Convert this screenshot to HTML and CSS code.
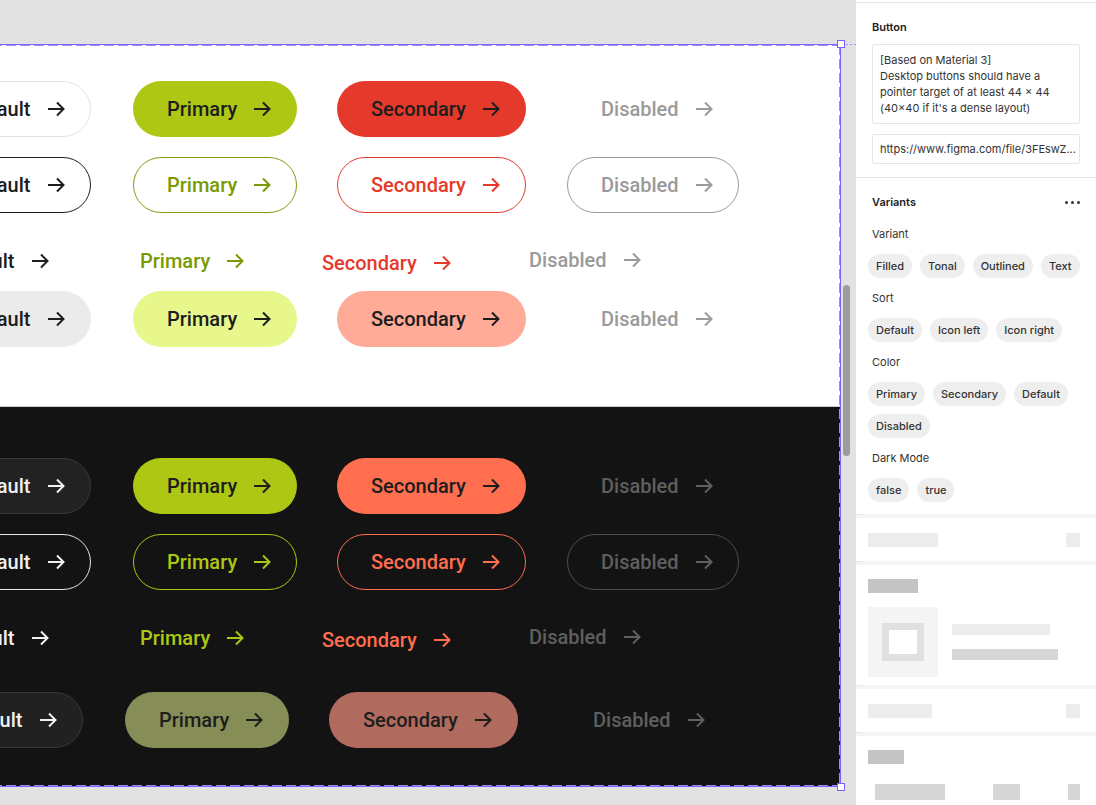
FILE: index.html
```html
<!DOCTYPE html>
<html lang="en">
<head>
<meta charset="utf-8">
<title>Button variants</title>
<link rel="stylesheet" href="styles.css">
</head>
<body>
<div class="app">
  <main class="canvas">
    <div class="frame">
      <section class="mode light">
        <div class="row">
          <span class="btn l-def-filled">Default<svg class="arr" viewBox="0 0 18 16"><path d="M1 8H16.5M10 1.5L16.5 8L10 14.5"/></svg></span>
          <span class="btn pri-filled">Primary<svg class="arr" viewBox="0 0 18 16"><path d="M1 8H16.5M10 1.5L16.5 8L10 14.5"/></svg></span>
          <span class="btn l-sec-filled">Secondary<svg class="arr" viewBox="0 0 18 16"><path d="M1 8H16.5M10 1.5L16.5 8L10 14.5"/></svg></span>
          <span class="btn l-dis">Disabled<svg class="arr" viewBox="0 0 18 16"><path d="M1 8H16.5M10 1.5L16.5 8L10 14.5"/></svg></span>
        </div>
        <div class="row gap">
          <span class="btn l-def-out">Default<svg class="arr" viewBox="0 0 18 16"><path d="M1 8H16.5M10 1.5L16.5 8L10 14.5"/></svg></span>
          <span class="btn l-pri-out">Primary<svg class="arr" viewBox="0 0 18 16"><path d="M1 8H16.5M10 1.5L16.5 8L10 14.5"/></svg></span>
          <span class="btn l-sec-out">Secondary<svg class="arr" viewBox="0 0 18 16"><path d="M1 8H16.5M10 1.5L16.5 8L10 14.5"/></svg></span>
          <span class="btn l-dis l-dis-out">Disabled<svg class="arr" viewBox="0 0 18 16"><path d="M1 8H16.5M10 1.5L16.5 8L10 14.5"/></svg></span>
        </div>
        <div class="row text-row gap">
          <span class="btn txt l-def-txt">Default<svg class="arr" viewBox="0 0 18 16"><path d="M1 8H16.5M10 1.5L16.5 8L10 14.5"/></svg></span>
          <span class="btn txt l-pri-txt">Primary<svg class="arr" viewBox="0 0 18 16"><path d="M1 8H16.5M10 1.5L16.5 8L10 14.5"/></svg></span>
          <span class="btn txt l-sec-txt down">Secondary<svg class="arr" viewBox="0 0 18 16"><path d="M1 8H16.5M10 1.5L16.5 8L10 14.5"/></svg></span>
          <span class="btn txt l-dis up">Disabled<svg class="arr" viewBox="0 0 18 16"><path d="M1 8H16.5M10 1.5L16.5 8L10 14.5"/></svg></span>
        </div>
        <div class="row gap-sm">
          <span class="btn l-def-tonal">Default<svg class="arr" viewBox="0 0 18 16"><path d="M1 8H16.5M10 1.5L16.5 8L10 14.5"/></svg></span>
          <span class="btn l-pri-tonal">Primary<svg class="arr" viewBox="0 0 18 16"><path d="M1 8H16.5M10 1.5L16.5 8L10 14.5"/></svg></span>
          <span class="btn l-sec-tonal">Secondary<svg class="arr" viewBox="0 0 18 16"><path d="M1 8H16.5M10 1.5L16.5 8L10 14.5"/></svg></span>
          <span class="btn l-dis">Disabled<svg class="arr" viewBox="0 0 18 16"><path d="M1 8H16.5M10 1.5L16.5 8L10 14.5"/></svg></span>
        </div>
      </section>
      <section class="mode dark">
        <div class="row">
          <span class="btn d-def-filled">Default<svg class="arr" viewBox="0 0 18 16"><path d="M1 8H16.5M10 1.5L16.5 8L10 14.5"/></svg></span>
          <span class="btn pri-filled">Primary<svg class="arr" viewBox="0 0 18 16"><path d="M1 8H16.5M10 1.5L16.5 8L10 14.5"/></svg></span>
          <span class="btn d-sec-filled">Secondary<svg class="arr" viewBox="0 0 18 16"><path d="M1 8H16.5M10 1.5L16.5 8L10 14.5"/></svg></span>
          <span class="btn d-dis">Disabled<svg class="arr" viewBox="0 0 18 16"><path d="M1 8H16.5M10 1.5L16.5 8L10 14.5"/></svg></span>
        </div>
        <div class="row gap">
          <span class="btn d-def-out">Default<svg class="arr" viewBox="0 0 18 16"><path d="M1 8H16.5M10 1.5L16.5 8L10 14.5"/></svg></span>
          <span class="btn d-pri-out">Primary<svg class="arr" viewBox="0 0 18 16"><path d="M1 8H16.5M10 1.5L16.5 8L10 14.5"/></svg></span>
          <span class="btn d-sec-out">Secondary<svg class="arr" viewBox="0 0 18 16"><path d="M1 8H16.5M10 1.5L16.5 8L10 14.5"/></svg></span>
          <span class="btn d-dis d-dis-out">Disabled<svg class="arr" viewBox="0 0 18 16"><path d="M1 8H16.5M10 1.5L16.5 8L10 14.5"/></svg></span>
        </div>
        <div class="row text-row gap">
          <span class="btn txt d-def-txt">Default<svg class="arr" viewBox="0 0 18 16"><path d="M1 8H16.5M10 1.5L16.5 8L10 14.5"/></svg></span>
          <span class="btn txt d-pri-txt">Primary<svg class="arr" viewBox="0 0 18 16"><path d="M1 8H16.5M10 1.5L16.5 8L10 14.5"/></svg></span>
          <span class="btn txt d-sec-txt down">Secondary<svg class="arr" viewBox="0 0 18 16"><path d="M1 8H16.5M10 1.5L16.5 8L10 14.5"/></svg></span>
          <span class="btn txt d-dis up">Disabled<svg class="arr" viewBox="0 0 18 16"><path d="M1 8H16.5M10 1.5L16.5 8L10 14.5"/></svg></span>
        </div>
        <div class="row shifted gap-lg">
          <span class="btn d-def-tonal">Default<svg class="arr" viewBox="0 0 18 16"><path d="M1 8H16.5M10 1.5L16.5 8L10 14.5"/></svg></span>
          <span class="btn d-pri-tonal">Primary<svg class="arr" viewBox="0 0 18 16"><path d="M1 8H16.5M10 1.5L16.5 8L10 14.5"/></svg></span>
          <span class="btn d-sec-tonal">Secondary<svg class="arr" viewBox="0 0 18 16"><path d="M1 8H16.5M10 1.5L16.5 8L10 14.5"/></svg></span>
          <span class="btn d-dis">Disabled<svg class="arr" viewBox="0 0 18 16"><path d="M1 8H16.5M10 1.5L16.5 8L10 14.5"/></svg></span>
        </div>
      </section>
      <span class="handle handle-tr"></span>
      <span class="handle handle-br"></span>
      <span class="guide"></span>
    </div>
    <div class="scrollbar"></div>
  </main>

  <aside class="panel">
    <div class="p-section p-top">
      <div class="p-title">Button</div>
      <div class="p-desc">[Based on Material 3]<br>Desktop buttons should have a pointer target of at least 44 × 44 (40×40 if it's a dense layout)</div>
      <div class="p-link">https://www.figma.com/file/3FEswZ...</div>
    </div>
    <div class="p-section p-variants">
      <div class="p-head"><span class="p-title">Variants</span><span class="dots"><i></i><i></i><i></i></span></div>
      <div class="p-label">Variant</div>
      <div class="chips"><span class="chip">Filled</span><span class="chip">Tonal</span><span class="chip">Outlined</span><span class="chip">Text</span></div>
      <div class="p-label">Sort</div>
      <div class="chips"><span class="chip">Default</span><span class="chip">Icon left</span><span class="chip">Icon right</span></div>
      <div class="p-label">Color</div>
      <div class="chips"><span class="chip">Primary</span><span class="chip">Secondary</span><span class="chip">Default</span><span class="chip">Disabled</span></div>
      <div class="p-label">Dark Mode</div>
      <div class="chips"><span class="chip">false</span><span class="chip">true</span></div>
    </div>
    <div class="sep"></div>
    <div class="blur-sec b1">
      <span class="blk w70"></span><span class="blk w14"></span>
    </div>
    <div class="sep"></div>
    <div class="blur-sec b2">
      <span class="blk w50 blk-dark"></span>
      <div class="b2-body">
        <div class="thumb"><span class="thumb-in"></span></div>
        <div class="b2-lines">
          <span class="blk w98"></span>
          <span class="blk w106 blk-mid"></span>
        </div>
      </div>
    </div>
    <div class="sep"></div>
    <div class="blur-sec b1">
      <span class="blk w64"></span><span class="blk w14"></span>
    </div>
    <div class="sep"></div>
    <div class="blur-sec b4">
      <span class="blk w36 blk-dark"></span>
      <div class="b4-row"><span class="blk w92 blk-mid"></span><span class="blk w36 blk-mid"></span><span class="blk w16 blk-mid"></span></div>
    </div>
  </aside>
</div>
</body>
</html>
```

FILE: styles.css
```css
* { box-sizing: border-box; }
html, body { margin: 0; padding: 0; }
body { width: 1096px; height: 805px; overflow: hidden; background: #e2e2e2; }

.app { display: flex; width: 1096px; height: 805px; }

/* ---------- canvas ---------- */
.canvas {
  position: relative;
  width: 856px;
  flex: 0 0 856px;
  height: 805px;
  overflow: hidden;
  background: #e2e2e2;
}
.frame {
  position: relative;
  margin-left: -120px;
  margin-top: 45px;
  width: 960px;
  height: 741px;
  outline: 1px solid #7b61ff;
  display: flex;
  flex-direction: column;
}
.frame::after {
  content: "";
  position: absolute;
  inset: 0;
  pointer-events: none;
  background:
    repeating-linear-gradient(90deg, #9d8bff 0 10px, transparent 10px 14px) top left / 100% 1px no-repeat,
    repeating-linear-gradient(90deg, #9d8bff 0 10px, transparent 10px 14px) bottom left / 100% 1px no-repeat,
    repeating-linear-gradient(180deg, #9d8bff 0 10px, transparent 10px 14px) top right / 1px 100% no-repeat;
}
.handle {
  position: absolute;
  width: 8px;
  height: 8px;
  background: #fff;
  border: 1px solid #7b61ff;
  z-index: 2;
}
.handle-tr { right: -5px; top: -5px; }
.handle-br { right: -5px; bottom: -5px; }
.guide {
  position: absolute;
  top: -1px;
  left: 966px;
  width: 20px;
  height: 1px;
  background: repeating-linear-gradient(90deg, #9d8bff 0 2px, transparent 2px 4px);
}
.scrollbar {
  position: absolute;
  left: 843px;
  top: 285px;
  width: 7px;
  height: 171px;
  border-radius: 4px;
  background: #9c9c9c;
}

.mode { display: flex; flex-direction: column; }
.light { background: #fff; height: 362px; padding-top: 36px; border-bottom: 1px solid #cdcdcd; }
.dark { background: #131313; flex: 1; padding-top: 51px; }

.row {
  display: grid;
  grid-template-columns: 201px 204px 230px auto;
  padding-left: 52px;
  height: 56px;
  align-items: center;
  justify-items: start;
}
.row.gap { margin-top: 20px; }
.row.gap-sm { margin-top: 2px; }
.row.gap-lg { margin-top: 26px; }
.row.text-row { grid-template-columns: 190px 182px 207px auto; padding-left: 58px; }
.row.shifted { padding-left: 44px; }

.btn {
  display: inline-flex;
  align-items: center;
  gap: 16px;
  height: 56px;
  padding: 0 25px 0 33px;
  border: 1px solid transparent;
  border-radius: 28px;
  font-family: Roboto, "Liberation Sans", sans-serif;
  font-weight: 500;
  font-size: 20px;
  line-height: 24px;
  white-space: nowrap;
  color: #1d1d1d;
}
.btn.txt { height: 40px; padding: 0 12px; border: 0; }
.btn.down { margin-top: 4px; }
.btn.up { margin-bottom: 2px; }

.arr { width: 18px; height: 16px; flex: 0 0 18px; }
.arr path { fill: none; stroke: currentColor; stroke-width: 2; }

/* light */
.l-def-filled { background: #fff; border-color: #e2e2e2; }
.pri-filled { background: #adc714; }
.l-sec-filled { background: #e53a2b; }
.l-dis { color: #9a9a9a; }
.l-def-out { border-color: #1d1d1d; }
.l-pri-out { border-color: #7d9c0e; color: #799a00; }
.l-sec-out { border-color: #e53a2b; color: #e53a2b; }
.l-dis-out { border-color: #9a9a9a; }
.l-def-txt { color: #1d1d1d; }
.l-pri-txt { color: #799a00; }
.l-sec-txt { color: #e53a2b; }
.l-def-tonal { background: #ebebeb; }
.l-pri-tonal { background: #e7f78b; }
.l-sec-tonal { background: #ffab97; }

/* dark */
.d-def-filled { background: #222; border-color: #3a3a3a; color: #f0f0f0; }
.d-sec-filled { background: #ff6e4f; }
.d-dis { color: #5f5f5f; }
.d-def-out { border-color: #e6e6e6; color: #f0f0f0; }
.d-pri-out { border-color: #adc714; color: #adc714; }
.d-sec-out { border-color: #ff6e4f; color: #ff6e4f; }
.d-dis-out { border-color: #4e4e4e; }
.d-def-txt { color: #f0f0f0; }
.d-pri-txt { color: #adc714; }
.d-sec-txt { color: #ff6e4f; }
.d-def-tonal { background: #212121; border-color: #383838; color: #f0f0f0; }
.d-pri-tonal { background: #878d57; }
.d-sec-tonal { background: #b06b5e; }

/* ---------- panel ---------- */
.panel {
  width: 240px;
  flex: 0 0 240px;
  height: 805px;
  background: #fff;
  font-family: Inter, "Noto Sans", sans-serif;
  font-size: 11px;
  line-height: 16px;
  color: #333;
  padding-top: 2px;
  overflow: hidden;
}
.p-section { padding: 0 16px; }
.p-top { border-top: 1px solid #e6e6e6; border-bottom: 1px solid #e6e6e6; padding-top: 16px; padding-bottom: 13px; }
.p-title { font-weight: 600; color: #222; }
.p-desc {
  margin-top: 9px;
  border: 1px solid #e6e6e6;
  border-radius: 2px;
  padding: 7px 7px;
  height: 80px;
  color: #333;
}
.p-link {
  margin-top: 10px;
  border: 1px solid #e6e6e6;
  border-radius: 2px;
  height: 30px;
  padding: 0 7px;
  display: flex;
  align-items: center;
  white-space: nowrap;
}
.p-variants { padding-top: 16px; padding-bottom: 12px; }
.p-head { display: flex; justify-content: space-between; align-items: center; }
.dots { display: flex; gap: 3px; }
.dots i { width: 3px; height: 3px; border-radius: 50%; background: #333; display: block; }
.p-label { margin-top: 16px; }
.chips + .p-label { margin-top: 12px; }
.chips { display: flex; flex-wrap: wrap; gap: 8px; margin-top: 12px; margin-left: -4px; margin-right: -8px; }
.chip {
  height: 24px;
  padding: 0 8px;
  border-radius: 12px;
  background: #eeeeee;
  display: inline-flex;
  align-items: center;
  font-weight: 500;
  color: #333;
}

.sep {
  height: 4px;
  background: linear-gradient(#e6e6e6, #e6e6e6) left top / 6px 1px no-repeat, #f5f5f5;
}
.blur-sec { padding: 0 16px 0 12px; }
.b1 { height: 43px; display: flex; justify-content: space-between; align-items: center; }
.b2 { height: 120px; padding-top: 14px; }
.b4 { height: 70px; padding-top: 14px; }
.blk { display: block; height: 14px; background: #ececec; }
.blk.blk-mid { background: #d6d6d6; }
.blk.blk-dark { background: #c4c4c4; }
.w14 { width: 14px; }
.w16 { width: 16px; }
.w36 { width: 36px; }
.w50 { width: 50px; }
.w64 { width: 64px; }
.w70 { width: 70px; }
.w92 { width: 92px; }
.w98 { width: 98px; }
.w106 { width: 106px; }
.b2-body { display: flex; align-items: center; gap: 14px; margin-top: 14px; }
.thumb {
  width: 70px;
  height: 70px;
  background: #f4f4f4;
  display: flex;
  align-items: center;
  justify-content: center;
}
.thumb-in { width: 42px; height: 38px; border: 7px solid #e0e0e0; background: #fff; }
.b2-lines { display: flex; flex-direction: column; gap: 14px; }
.b2-lines .blk { height: 11px; }
.b4-row { display: flex; gap: 48px; margin-top: 20px; padding-left: 7px; }
.b4-row .blk { height: 16px; }
```
